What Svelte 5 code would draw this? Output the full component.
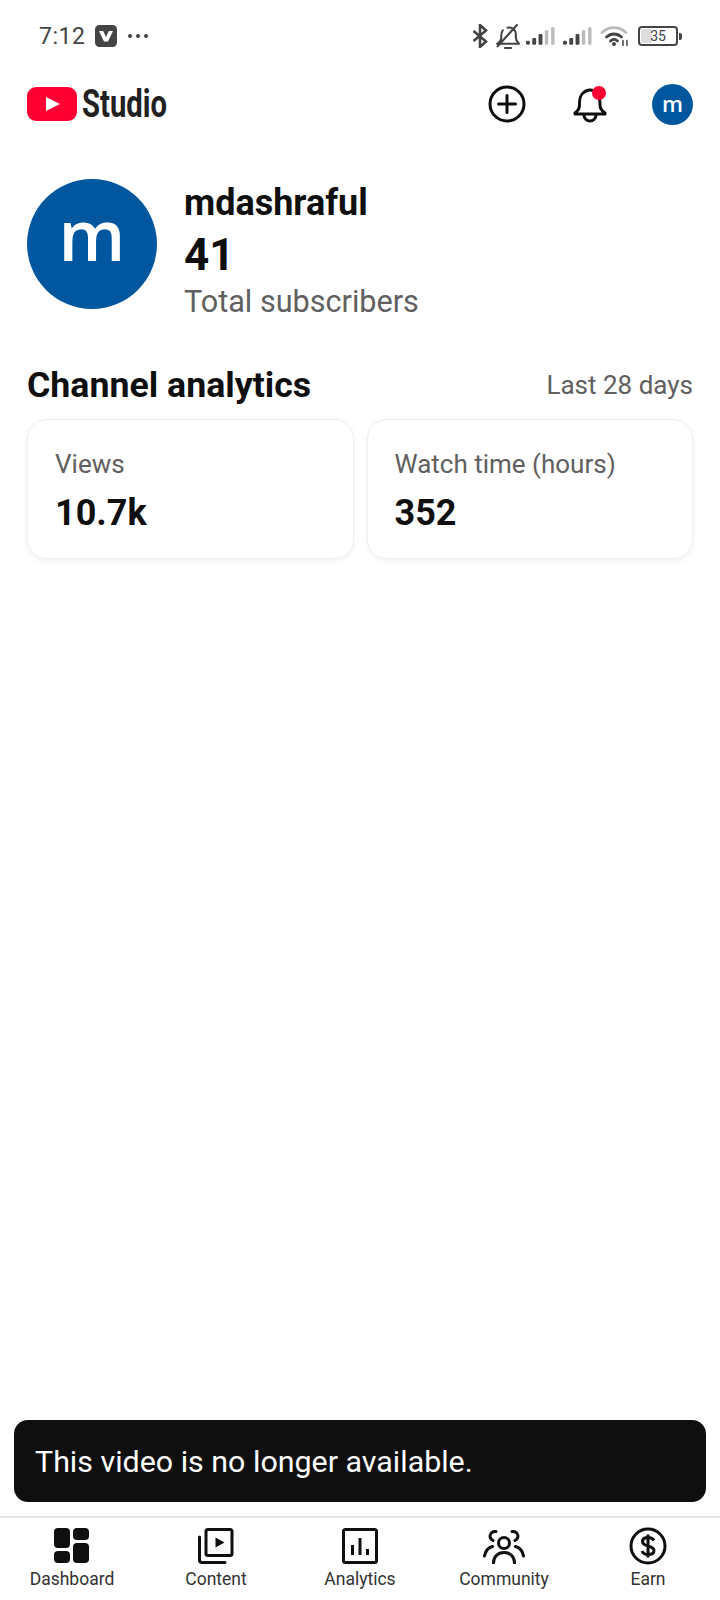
<script>
  const cards = [
    { label: 'Views', value: '10.7k' },
    { label: 'Watch time (hours)', value: '352' },
  ];
</script>

<div class="screen">
  <div class="status">
    <div class="status-left">
      <span class="time">7:12</span>
      <svg class="vpn" viewBox="0 0 22 22" width="22" height="22">
        <rect width="22" height="22" rx="4.5" fill="#444" />
        <path d="M4 6h4.200L11 12l2.800-6H18l-5 10.500H9z" fill="#fff" />
      </svg>
      <svg viewBox="0 0 22 6" width="22" height="6" fill="#444">
        <circle cx="3" cy="3" r="2" /><circle cx="11" cy="3" r="2" /><circle cx="19" cy="3" r="2" />
      </svg>
    </div>
    <div class="status-right">
      <svg class="bt" viewBox="0 0 16 24" width="16" height="24" fill="none" stroke="#444" stroke-width="2.6">
        <path d="M1.500 7l12.500 10.500L8 23V1l6 5.500L1.500 17" />
      </svg>
      <svg class="mute" viewBox="0 0 24 24" width="25" height="25" fill="none" stroke="#444" stroke-width="2" stroke-linecap="round" stroke-linejoin="round">
        <path d="M2 19h21c-2-2-3-3-3-6V9a6.500 6.500 0 0 0-8-5.500M7.500 6C6.500 7.500 6 9 6 11v2c0 3-1.500 4.500-4 6M9.500 23h6M2.500 21.500L21 1" />
      </svg>
      {#each [0, 1] as sim}
        <svg class="signal" viewBox="0 0 30 20" width="29" height="20">
          <rect x="0" y="15" width="4" height="4" rx="1.500" fill="#444" />
          <rect x="6.500" y="12" width="4" height="7" rx="1" fill="#444" />
          <rect x="13" y="8" width="4" height="11" rx="1" fill="#444" />
          <rect x="19.500" y="4" width="3.500" height="15" rx="1" fill="#bbb" />
          <rect x="26" y="1" width="3.500" height="18" rx="1" fill="#bbb" />
        </svg>
      {/each}
      <svg class="wifi" viewBox="0 0 30 22" width="30" height="22" fill="none" stroke-linecap="round">
        <path d="M2 7.500C9 1 19 1 26 7.500" stroke="#bbb" stroke-width="2.800" />
        <path d="M6.500 12c4.500-4 10.500-4 15 0" stroke="#444" stroke-width="2.800" />
        <path d="M10.500 16c2.200-2 4.800-2 7 0" stroke="#444" stroke-width="2.800" />
        <circle cx="14" cy="19" r="2" fill="#444" />
        <path d="M23 15.500v5M27 15.500v5" stroke="#444" stroke-width="1.500" />
      </svg>
      <div class="battery">
        <div class="battery-body"><span class="battery-fill"></span><span class="battery-num">35</span></div>
        <span class="battery-tip"></span>
      </div>
    </div>
  </div>

  <header class="topbar">
    <div class="logo">
      <svg viewBox="0 0 50 34" width="50" height="34">
        <rect width="50" height="34" rx="9" fill="#ff0033" />
        <path d="M19 10l14 7-14 7z" fill="#fff" />
      </svg>
      <span class="logo-text">Studio</span>
    </div>
    <div class="actions">
      <svg viewBox="0 0 38 38" width="38" height="38" fill="none" stroke="#0f0f0f" stroke-width="3" stroke-linecap="round">
        <circle cx="19" cy="19" r="17" />
        <path d="M19 10.500v17M10.500 19h17" />
      </svg>
      <svg class="bell" viewBox="0 0 36 38" width="36" height="38" fill="none" stroke="#0f0f0f" stroke-width="3" stroke-linejoin="round">
        <path d="M2 28c3-2 4.500-4 4.500-8v-3c0-6 3.500-11 10-12 4-.6 9 3 10 9 .4 2.500.5 4 .5 6 0 4 2 6 5 8v1H2z" />
        <path d="M11 30a6 6 0 0 0 12 0" />
        <circle cx="26" cy="8" r="7" fill="#ff0033" stroke="none" />
      </svg>
      <div class="avatar-small">m</div>
    </div>
  </header>

  <section class="channel">
    <div class="avatar-big">m</div>
    <div class="channel-info">
      <div class="name">mdashraful</div>
      <div class="subs">41</div>
      <div class="subs-label">Total subscribers</div>
    </div>
  </section>

  <section class="analytics">
    <div class="analytics-head">
      <h2>Channel analytics</h2>
      <span>Last 28 days</span>
    </div>
    <div class="cards">
      {#each cards as card}
        <div class="card">
          <div class="card-label">{card.label}</div>
          <div class="card-value">{card.value}</div>
        </div>
      {/each}
    </div>
  </section>

  <div class="toast">This video is no longer available.</div>

  <nav class="tabs">
    <div class="tab">
      <svg viewBox="0 0 36 36" width="36" height="36" fill="#0f0f0f">
        <rect x="0" y="0" width="16" height="20" rx="4" />
        <rect x="19" y="0" width="16" height="12" rx="4" />
        <rect x="0" y="23" width="16" height="12" rx="4" />
        <rect x="19" y="15" width="16" height="20" rx="4" />
      </svg>
      <span>Dashboard</span>
    </div>
    <div class="tab">
      <svg viewBox="0 0 36 36" width="36" height="36" fill="none" stroke="#0f0f0f" stroke-width="3">
        <rect x="8" y="1.500" width="26" height="26" rx="2" />
        <path d="M1.500 9v23c0 1.500 1 2.500 2.500 2.500h23" stroke-linecap="round" />
        <path d="M17.500 9.500l9 5-9 5z" fill="#0f0f0f" stroke="none" />
      </svg>
      <span>Content</span>
    </div>
    <div class="tab">
      <svg viewBox="0 0 36 36" width="36" height="36" fill="none" stroke="#0f0f0f" stroke-width="3">
        <rect x="1.500" y="1.500" width="33" height="33" rx="2" />
        <path d="M10.500 17v10M18 10v17M25.500 21v6" />
      </svg>
      <span>Analytics</span>
    </div>
    <div class="tab">
      <svg viewBox="0 0 42 36" width="42" height="36" fill="none" stroke="#0f0f0f" stroke-width="3" stroke-linecap="round">
        <circle cx="21" cy="15" r="5.500" />
        <path d="M10.500 35c0-6 4-10.500 10.500-10.500S31.500 29 31.500 35" />
        <path d="M13 3.500c-3-.5-6 1.500-6 4.500 0 2 1 3.500 3 4.500M29 3.500c3-.5 6 1.500 6 4.500 0 2-1 3.500-3 4.500" />
        <path d="M1.500 28c1-5 4-8.500 8-9.500M40.500 28c-1-5-4-8.500-8-9.500" />
      </svg>
      <span>Community</span>
    </div>
    <div class="tab">
      <svg class="earn" viewBox="0 0 38 38" width="38" height="38" fill="none" stroke="#0f0f0f">
        <circle cx="19" cy="19" r="17" stroke-width="3" />
        <path d="M25 13.500c-1-2-3-3-6-3-3.500 0-5.500 1.500-5.500 4s2 3.500 5.500 4.500 6 2 6 4.500-2.500 4-6 4c-3 0-5-1-6-3.500M19 7.500v23" stroke-width="3" />
      </svg>
      <span>Earn</span>
    </div>
  </nav>
</div>

<style>
  :global(body) {
    margin: 0;
    background: #fff;
  }

  .screen {
    width: 720px;
    height: 1600px;
    display: flex;
    flex-direction: column;
    font-family: Roboto, sans-serif;
    color: #0f0f0f;
    background: #fff;
    overflow: hidden;
  }

  .status {
    height: 72px;
    box-sizing: border-box;
    padding: 0 38px 0 39px;
    display: flex;
    justify-content: space-between;
    align-items: center;
  }

  .status-left {
    display: flex;
    align-items: center;
    gap: 10px;
  }

  .time {
    font-size: 23px;
    color: #444;
    letter-spacing: 0.5px;
  }

  .status-right {
    display: flex;
    align-items: center;
    gap: 8px;
  }

  .bt {
    margin-right: -1px;
  }

  .mute {
    margin-right: -2px;
  }

  .battery {
    display: flex;
    align-items: center;
    gap: 1px;
    margin-left: 0;
  }

  .battery-body {
    position: relative;
    width: 36px;
    height: 16px;
    border: 2px solid #444;
    border-radius: 4px;
    overflow: hidden;
  }

  .battery-fill {
    position: absolute;
    left: 1px;
    top: 1px;
    bottom: 1px;
    width: 11px;
    background: #ddd;
  }

  .battery-num {
    position: absolute;
    inset: 0;
    text-align: center;
    font-size: 14px;
    line-height: 16px;
    color: #444;
  }

  .battery-tip {
    width: 3px;
    height: 7px;
    background: #444;
    border-radius: 0 2px 2px 0;
  }

  .topbar {
    height: 64px;
    padding: 0 27px;
    display: flex;
    justify-content: space-between;
    align-items: center;
  }

  .logo {
    display: flex;
    align-items: center;
    gap: 5px;
  }

  .logo-text {
    font-size: 39px;
    font-weight: 700;
    color: #212121;
    display: inline-block;
    width: 85px;
    transform: scaleX(0.75);
    transform-origin: left center;
    white-space: nowrap;
  }

  .actions {
    display: flex;
    align-items: center;
    gap: 47px;
  }

  .avatar-small {
    width: 41px;
    height: 41px;
    margin-left: -4px;
    border-radius: 50%;
    background: #00579f;
    color: #fff;
    font-size: 22px;
    font-weight: 600;
    display: flex;
    align-items: center;
    justify-content: center;
    padding-bottom: 3px;
    box-sizing: border-box;
    font-family: 'Open Sans', sans-serif;
  }

  .channel {
    margin-top: 43px;
    padding: 0 27px;
    display: flex;
    align-items: flex-start;
    gap: 27px;
  }

  .avatar-big {
    width: 130px;
    height: 130px;
    border-radius: 50%;
    background: #00579f;
    color: #fff;
    font-family: 'Open Sans', sans-serif;
    font-size: 70px;
    font-weight: 600;
    display: flex;
    align-items: center;
    justify-content: center;
    padding-bottom: 20px;
    box-sizing: border-box;
  }

  .channel-info {
    display: flex;
    flex-direction: column;
  }

  .name {
    font-size: 36px;
    font-weight: 700;
    line-height: 48px;
  }

  .subs {
    margin-top: 1px;
    font-size: 44px;
    font-weight: 700;
    line-height: 54px;
  }

  .subs-label {
    font-size: 30.6px;
    line-height: 40px;
    color: #606060;
  }

  .analytics {
    margin-top: 40px;
    padding: 0 27px;
  }

  .analytics-head {
    display: flex;
    justify-content: space-between;
    align-items: center;
    height: 46px;
    margin-bottom: 11px;
  }

  .analytics-head h2 {
    margin: 0;
    font-size: 35.7px;
    font-weight: 700;
  }

  .analytics-head span {
    font-size: 26px;
    color: #606060;
  }

  .cards {
    display: grid;
    grid-template-columns: 1fr 1fr;
    gap: 13px;
  }

  .card {
    height: 140px;
    box-sizing: border-box;
    padding: 26px 27px;
    border-radius: 20px;
    border: 1px solid #eeeeee;
    box-shadow: 0 2px 6px rgba(0, 0, 0, 0.06);
  }

  .card-label {
    font-size: 26px;
    line-height: 36px;
    color: #606060;
  }

  .card-value {
    margin-top: 8px;
    font-size: 36px;
    font-weight: 700;
    line-height: 46px;
  }

  .toast {
    margin: auto 14px 14px;
    height: 82px;
    padding-left: 21px;
    display: flex;
    align-items: center;
    border-radius: 14px;
    background: #0f0f0f;
    color: #fff;
    font-size: 30.4px;
  }

  .tabs {
    height: 84px;
    box-sizing: border-box;
    border-top: 2px solid #e5e5e5;
    display: flex;
    justify-content: space-between;
    padding: 10px 0 0 0;
  }

  .tab {
    width: 144px;
    display: flex;
    flex-direction: column;
    align-items: center;
    gap: 3px;
    font-size: 17.5px;
    color: #333;
  }

  .earn {
    margin: -1px 0;
  }

  .tab span {
    line-height: 24px;
  }
</style>
